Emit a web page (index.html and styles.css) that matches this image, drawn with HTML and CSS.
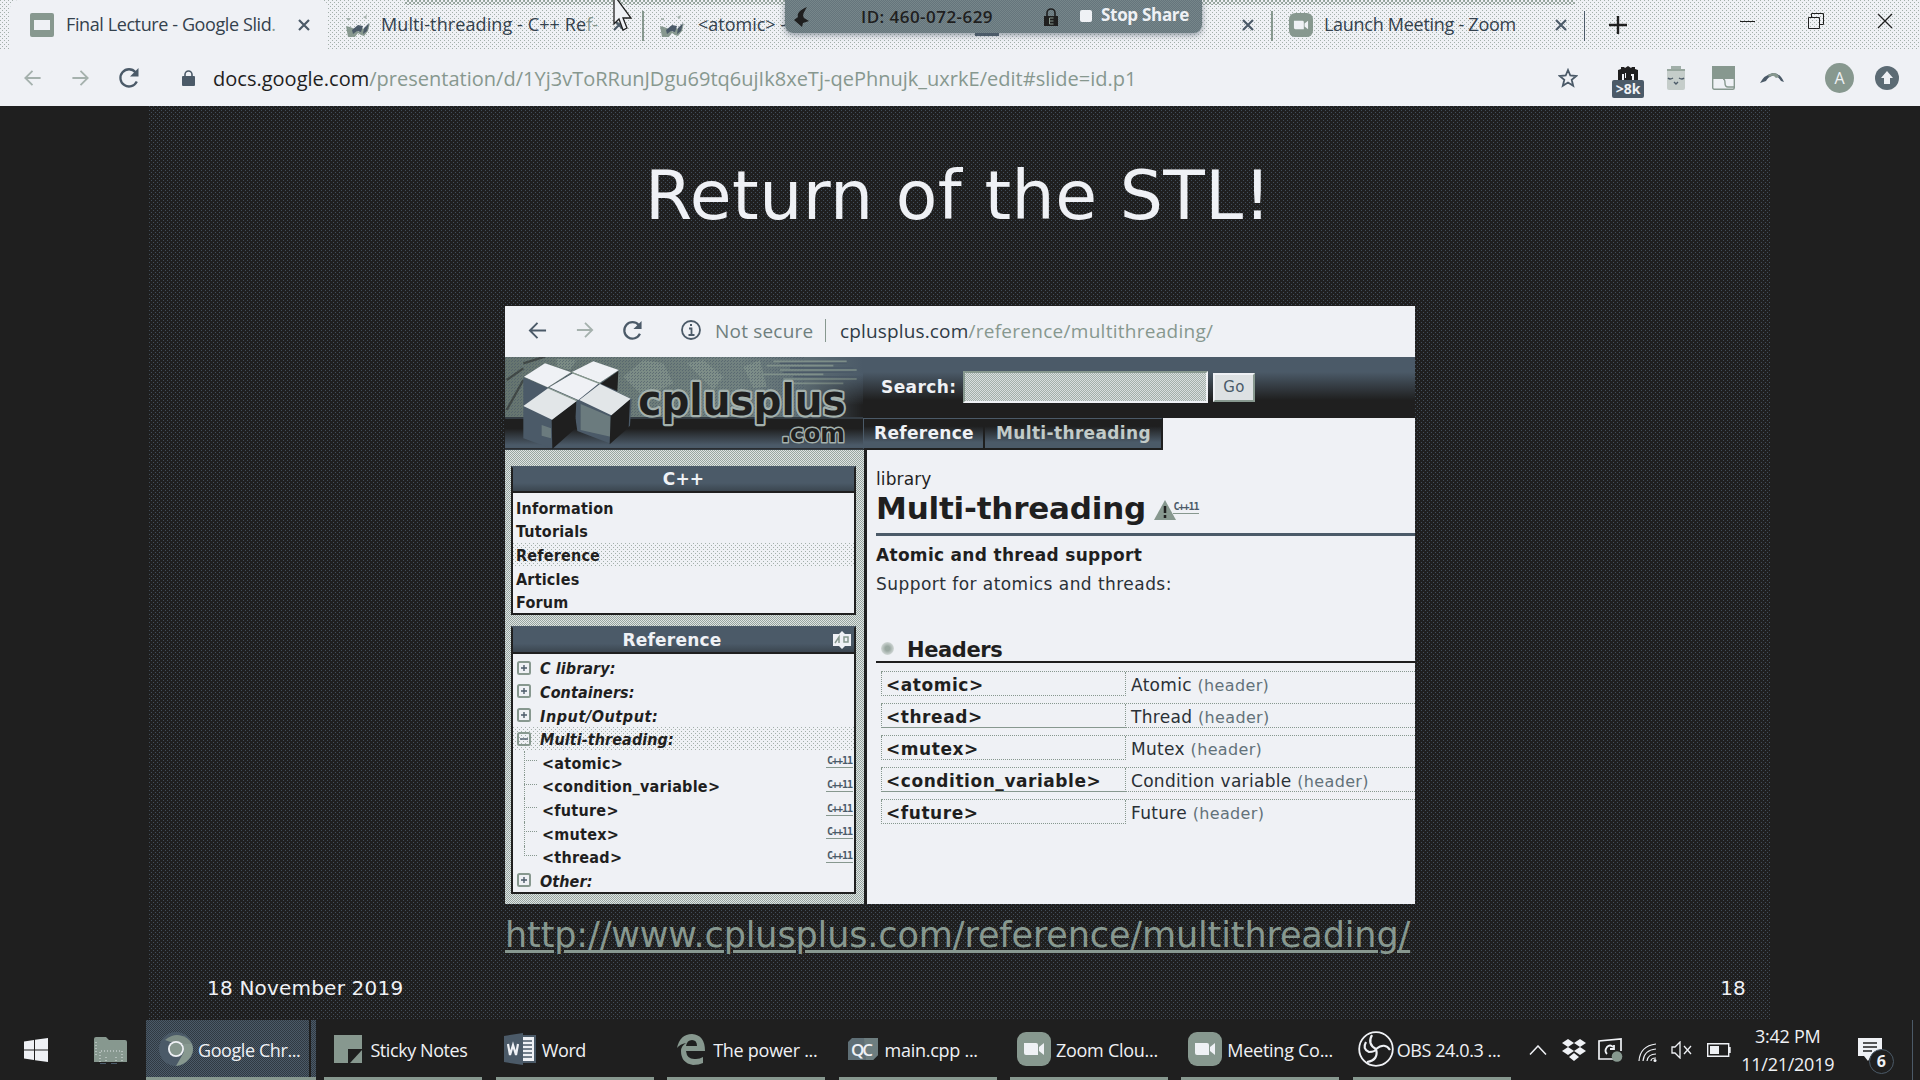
FILE: index.html
```
<!DOCTYPE html>
<html lang="en">
<head>
<meta charset="utf-8">
<title>Final Lecture - Google Slides</title>
<link rel="stylesheet" href="styles.css">
</head>
<body>
<svg class="defs" width="0" height="0">
  <symbol id="x" viewBox="0 0 12 12"><path d="M1 1L11 11M11 1L1 11" fill="none" stroke="currentColor" stroke-width="2.2"/></symbol>
  <symbol id="cube" viewBox="0 0 24 24"><path d="M1 5h3v2H1zM17 4l4-2-1 4z" fill="#a9b5b0"/><path d="M0 13l4 1 5 2 4 3 2-4 4 1 5-6-2 8-4 5-3-1-3-2-4 5-6-1z" fill="#87988f"/><path d="M6 17l6-5 5 1-2 6-4-1-4 3zM18 15l5-5-2 8-4 3z" fill="#4b5a68"/></symbol>
  <symbol id="cam" viewBox="0 0 34 34"><rect width="34" height="34" rx="9" fill="#87988f"/><path d="M7 11h12q2 0 2 2v10H9q-2 0-2-2zM22 15l5-4v12l-5-4z" fill="#eff1f5"/></symbol>
  <symbol id="plus" viewBox="0 0 14 14"><rect x="1" y="1" width="12" height="12" rx="1.5" fill="none" stroke="#87988f" stroke-width="2"/><path d="M4 7h6M7 4v6" stroke="#4b5a68" stroke-width="1.4"/></symbol>
  <symbol id="minus" viewBox="0 0 14 14"><rect x="1" y="1" width="12" height="12" rx="1.5" fill="none" stroke="#87988f" stroke-width="2"/><path d="M3 7h8" stroke="#4b5a68" stroke-width="1.4"/></symbol>
  <symbol id="reload" viewBox="0 0 22 22"><path d="M17.5 5.2A8.6 8.6 0 1 0 18.8 14.5" fill="none" stroke="currentColor" stroke-width="2.3"/><path d="M20.5 1v8.5H12z" fill="currentColor"/></symbol>
  <symbol id="arrow" viewBox="0 0 20 20"><path d="M19 10H2M10 2L2 10l8 8" fill="none" stroke="currentColor" stroke-width="2"/></symbol>
</svg>

<header class="tabs">
  <div class="tab active"><svg class="fav" viewBox="0 0 24 24"><rect width="24" height="24" rx="2" fill="#87988f"/><rect x="4" y="7" width="16" height="10" fill="#eff1f5"/></svg><span class="t1">Final Lecture - Google Slid<i>.</i></span><svg class="close"><use href="#x"/></svg></div>
  <div class="tab two"><svg class="fav"><use href="#cube"/></svg><span class="t2">Multi-threading - C++ Re<i>f-</i></span><svg class="close"><use href="#x"/></svg></div>
  <div class="tab three"><svg class="fav"><use href="#cube"/></svg><span class="t3">&lt;atomic&gt; -</span></div>
  <div class="tab four"><svg class="close"><use href="#x"/></svg></div>
  <div class="tab five"><svg class="fav"><use href="#cam"/></svg><span class="t5">Launch Meeting - Zoom</span><svg class="close"><use href="#x"/></svg></div>
  <svg class="new" viewBox="0 0 18 18"><path d="M9 0v18M0 9h18" stroke="#1f1f1f" stroke-width="2.4"/></svg>
  <div class="win">
    <svg width="15" height="20" viewBox="0 0 15 20"><path d="M0 10.5h15" stroke="#1f1f1f"/></svg>
    <svg width="16" height="16" viewBox="0 0 16 16"><path d="M.5 4.500h11v11H.5zM3.500 4.500v-4h12v11h-4" fill="none" stroke="#1f1f1f"/></svg>
    <svg width="16" height="16" viewBox="0 0 16 16"><path d="M1 1l14 14M15 1L1 15" stroke="#1f1f1f" stroke-width="1.300"/></svg>
  </div>
  <div class="sharebar">
    <svg width="17" height="20" viewBox="0 0 17 20"><path d="M14 0C6 3 4 7 5 10L1 13l8 7 1-4 6-2-5-3c-2-3 0-6 3-11z" fill="#1f1f1f"/></svg>
    <span class="id">ID: 460-072-629</span>
    <svg class="lk" width="14" height="18" viewBox="0 0 14 18"><path d="M3 8V5a4 4 0 0 1 8 0v3" fill="none" stroke="#1f1f1f" stroke-width="1.600"/><path d="M0 8h14v10H0z" fill="#1f1f1f"/><path d="M9.500 10h-4v6h4M5.500 13h4" fill="none" stroke="#87988f"/></svg>
    <b class="sq"></b><span class="stop">Stop Share</span>
  </div>
  <i class="peek"></i>
  <svg class="cursor" viewBox="0 0 20 34"><path d="M1-5V24l5-5 4 11 4-2-4-10h8z" fill="#eff1f5" stroke="#1f1f1f" stroke-width="1.300"/></svg>
</header>

<nav class="toolbar">
  <svg class="back dim"><use href="#arrow"/></svg>
  <svg class="fwd dim"><use href="#arrow"/></svg>
  <svg class="rel"><use href="#reload"/></svg>
  <svg class="lock" viewBox="0 0 13 16"><path d="M3 7V4.500a3.500 3.500 0 0 1 7 0V7" fill="none" stroke="#4b5a68" stroke-width="1.600"/><rect y="6" width="13" height="10" rx="1" fill="#4b5a68"/></svg>
  <p class="url"><b>docs.google.com</b>/presentation/d/1Yj3vToRRunJDgu69tq6ujIk8xeTj-qePhnujk_uxrkE/edit#slide=id.p1</p>
  <div class="ext">
    <svg width="20" height="20" viewBox="0 0 20 20"><path d="M10 2l2.300 5.500 6 .5-4.600 3.800 1.500 6L10 14.600 4.800 17.800l1.500-6L1.700 8l6-.5z" fill="none" stroke="#4b5a68" stroke-width="1.800"/></svg>
    <div class="blk"><svg width="22" height="14" viewBox="0 0 22 14"><path d="M1 14V4l3-1V1h3l1 1 3-2 3 2 1-1h3v2l3 1v10h-4V8h-2v6H7V8H5v6z" fill="#1f1f1f"/><path d="M8 7h1v5H8zM14 8h2v2h-2z" fill="#eff1f5"/></svg><em>&gt;8k</em></div>
    <svg width="22" height="24" viewBox="0 0 22 24"><path d="M2 3h18v19q0 2-2 2H4q-2 0-2-2z" fill="#c5cdca"/><path d="M6 0h10v3h4v2H2V3h4z" fill="#87988f" opacity=".75"/><path d="M3 12q2 2 5 0m6 0q3 2 5 0M9 16l2 2 2-2" fill="none" stroke="#4b5a68" stroke-width="1.400"/></svg>
    <svg width="23" height="24" viewBox="0 0 23 24"><rect x=".7" y=".7" width="21.600" height="22.600" rx="1.500" fill="#eff1f5" stroke="#87988f" stroke-width="1.400"/><path d="M0 0h23v13H0z" fill="#87988f"/><path d="M11 13q2 0 2 4t3 4h6" fill="none" stroke="#87988f" stroke-width="1.400"/></svg>
    <svg width="24" height="12" viewBox="0 0 24 12"><path d="M0 11Q4 3 13 1q7 0 11 9l-3-1Q17 3 12 4 8 5 6 9z" fill="#4b5a68"/><path d="M8 3q8-5 11 2l-3 1q-3-4-7-1z" fill="#87988f"/></svg>
    <span class="ava">A</span>
    <svg class="up" width="24" height="24" viewBox="0 0 24 24"><circle cx="12" cy="12" r="12" fill="#5c6b74"/><path d="M12 5l6 7h-3v6H9v-6H6z" fill="#eff1f5"/></svg>
  </div>
</nav>

<main class="stage">
  <section class="slide">
    <h1>Return of the STL!</h1>
    <div class="shot">
      <div class="snav">
        <svg class="sb"><use href="#arrow"/></svg><svg class="sf"><use href="#arrow"/></svg><svg class="sr"><use href="#reload"/></svg>
        <svg class="si" viewBox="0 0 20 20"><circle cx="10" cy="10" r="9" fill="none" stroke="#4b5a68" stroke-width="1.800"/><path d="M8 8.500h2.500V15M7.500 15h6M9 5h2" fill="none" stroke="#4b5a68" stroke-width="1.800"/></svg>
        <span class="ns">Not secure</span><span class="su"><b>cplusplus.com</b>/reference/multithreading/</span>
      </div>
      <div class="banner">
        <svg class="logo" viewBox="15 171 1074 279">
          <defs>
            <linearGradient id="g1" x2="0" y2="1"><stop offset="0" stop-color="#1f1f1f"/><stop offset=".35" stop-color="#1f1f1f"/><stop offset=".85" stop-color="#4b5a68"/></linearGradient>
            <linearGradient id="g2"><stop offset="0" stop-color="#66756f"/><stop offset=".65" stop-color="#728280"/><stop offset="1" stop-color="#4b5a68"/></linearGradient>
            <linearGradient id="g4" x2="0" y2="1"><stop offset=".3" stop-color="#1f1f1f" stop-opacity="0"/><stop offset=".8" stop-color="#1f1f1f"/></linearGradient>
            <linearGradient id="g5"><stop offset="0" stop-color="#000"/><stop offset="1" stop-color="#fff"/></linearGradient>
            <mask id="m"><rect x="900" y="171" width="189" height="180" fill="url(#g5)"/></mask>
            <pattern id="p" width="9" height="9" patternUnits="userSpaceOnUse"><path d="M0 0h3v3H0zM6 3h3v3H6z" fill="#4b5a68"/></pattern>
          </defs>
          <rect x="15" y="171" width="1074" height="182" fill="url(#g2)"/>
          <path d="M370 230l60-50 60 10 30 60-40 20-60 10zM560 190l50-10 60 50-30 40zM730 200l50-20 20 80-40 5zM170 176l60 4-20 30-40-10z" fill="#87988f" opacity=".6"/>
          <rect x="15" y="171" width="900" height="182" fill="url(#p)" opacity=".6"/>
          <path d="M820 184h220M800 197h200M840 210h230M790 223h180M850 237h220M880 250h150" stroke="#87988f" stroke-width="5" opacity=".8"/>
          <path d="M840 190h200M870 204h190M850 217h210M880 230h200" stroke="#4b5a68" stroke-width="4"/>
          <rect x="900" y="171" width="189" height="180" fill="url(#g4)" mask="url(#m)"/>
          <rect x="15" y="351" width="1074" height="99" fill="url(#g1)"/>
          <path d="M15 354H1089" stroke="#4b5a68" stroke-width="3"/>
          <path d="M70 190l65-20M20 240l50-35M20 330l50-90" stroke="#1f1f1f" stroke-width="7" opacity=".5"/>
          <path d="M70 232l75 32 70 35v50l-57 98-88-32z" fill="#4b5a68"/><path d="M145 264l70-45 85 32 55-38-5 62 45 22-5 80-58 54-100-38-12-80z" fill="#4b5a68"/>
          <path d="M242 312l90 38v60l-90-20zM125 375l28 10v30l-28-8z" fill="#87988f" opacity=".55"/>
          <path d="M155 360l74-56-4 82-68 61zM332 347l58-50-4 86-57 50zM302 251l53-38-3 60z" fill="#1f1f1f"/>
          <path d="M72 230l63-40 78 27-70 45zM216 216l64-32 76 26-57 38zM148 262l71-42 78 30-62 50z" fill="#eff1f5"/>
          <path d="M70 318l75-54 86 38-75 57zM238 300l62-48 92 44-58 50z" fill="#e2e6e8"/>
          <path d="M145 264l86 38M216 218l84 33" stroke="#87988f" stroke-width="4"/>
          <g font-family="DejaVu Sans" font-weight="700" fill="#1f1f1f" stroke="#a4b1ad" paint-order="stroke" stroke-linejoin="round">
            <text x="415" y="346" font-size="126" textLength="622" lengthAdjust="spacingAndGlyphs" stroke-width="13">cplusplus</text>
            <text x="843" y="427" font-size="76" textLength="192" lengthAdjust="spacingAndGlyphs" stroke-width="9">.com</text>
          </g>
          <path d="M15 446.500H1089" stroke="#1f1f1f" stroke-width="4"/>
        </svg>
        <div class="right">
          <div class="search"><b>Search:</b><span class="inp"></span><span class="go">Go</span></div>
          <div class="crumbs"><span class="c1">Reference</span><span class="c2">Multi-threading</span></div>
        </div>
      </div>
      <div class="cols">
        <aside>
          <div class="box first"><h3>C++</h3>
            <ul><li>Information</li><li>Tutorials</li><li class="hl">Reference</li><li>Articles</li><li>Forum</li></ul></div>
          <div class="box"><h3>Reference<svg class="hi" viewBox="0 0 20 18"><path d="M1 3h6l3-3 3 3h6v12h-6l-3 3-3-3H1z" fill="#eff1f5"/><path d="M3 12l4-6v6M12 6h4v5h-4z" fill="none" stroke="#87988f" stroke-width="1.500"/></svg></h3>
            <ul class="tree">
              <li><svg><use href="#plus"/></svg><i>C library:</i></li>
              <li><svg><use href="#plus"/></svg><i>Containers:</i></li>
              <li><svg><use href="#plus"/></svg><i class="io">Input/Output:</i></li>
              <li class="hl"><svg><use href="#minus"/></svg><i>Multi-threading:</i></li>
              <li class="sub"><span>&lt;atomic&gt;</span><em>C++11</em></li>
              <li class="sub"><span>&lt;condition_variable&gt;</span><em>C++11</em></li>
              <li class="sub"><span>&lt;future&gt;</span><em>C++11</em></li>
              <li class="sub"><span>&lt;mutex&gt;</span><em>C++11</em></li>
              <li class="sub last"><span>&lt;thread&gt;</span><em>C++11</em></li>
              <li><svg><use href="#plus"/></svg><i>Other:</i></li>
            </ul></div>
        </aside>
        <article>
          <div class="lib">library</div>
          <h2>Multi-threading<svg viewBox="0 0 22 20"><path d="M11 0l11 20H0z" fill="#87988f"/><path d="M11 6v7M11 15v3" stroke="#1f1f1f" stroke-width="2.500"/></svg><em>C++11</em></h2>
          <h4>Atomic and thread support</h4>
          <p>Support for atomics and threads:</p>
          <h5><i></i>Headers</h5>
          <div class="tbl">
            <div><b>&lt;atomic&gt;</b><span>Atomic <small>(header)</small></span></div>
            <div><b>&lt;thread&gt;</b><span>Thread <small>(header)</small></span></div>
            <div><b>&lt;mutex&gt;</b><span>Mutex <small>(header)</small></span></div>
            <div><b>&lt;condition_variable&gt;</b><span>Condition variable <small>(header)</small></span></div>
            <div><b>&lt;future&gt;</b><span>Future <small>(header)</small></span></div>
          </div>
        </article>
      </div>
    </div>
    <a class="link">http://www.cplusplus.com/reference/multithreading/</a>
    <footer><span>18 November 2019</span><span>18</span></footer>
  </section>
</main>

<footer class="taskbar">
  <svg class="start" viewBox="0 0 24 24"><path d="M0 3.500l10-1.500v9.500H0zM11 1.800L24 0v11.500H11zM0 12.500h10V22L0 20.500zM11 12.500h13V24l-13-1.800z" fill="#eff1f5"/></svg>
  <svg class="files" viewBox="0 0 33 27"><path d="M0 2q0-2 2-2h10l3 3h16q2 0 2 2v20H0z" fill="#87988f"/><path d="M2 5v15M6 25V14h22v11M12 20v5M22 20v5" fill="none" stroke="#dfe4e6" stroke-dasharray="1 2"/><path d="M6 27h6M17 27h6" stroke="#4b5a68" stroke-width="2"/></svg>
  <div class="apps">
    <div class="app on"><svg viewBox="0 0 34 34"><circle cx="17" cy="17" r="17" fill="#4b5a68"/><path d="M6 8a17 17 0 0 1 27 4H17z" fill="#7d8d86"/><path d="M24 12h9q3 8-3 15-5 6-13 7l8-14z" fill="#87988f"/><circle cx="17" cy="17" r="8" fill="#eff1f5"/><circle cx="17" cy="17" r="6.200" fill="#87988f"/></svg><span class="ls4">Google Chr...</span></div>
    <div class="app"><svg viewBox="0 0 34 34"><path d="M3 3h28v28H3z" fill="#87988f"/><path d="M17 31V17h14v14z" fill="#1f1f1f"/><path d="M19 31L31 18v13z" fill="#87988f"/></svg><span class="ls4">Sticky Notes</span></div>
    <div class="app"><svg viewBox="0 0 34 34"><path d="M15 4h17v26H15z" fill="#eff1f5" stroke="#4b5a68" stroke-width="2"/><path d="M20 9h9M20 13h9M20 17h9M20 21h9M20 25h9" stroke="#4b5a68" stroke-width="1.500"/><path d="M1 4L20 1v32L1 30z" fill="#4b5a68"/><path d="M5 12l2 11 3-10 3 10 2-11" fill="none" stroke="#eff1f5" stroke-width="2.200"/></svg><span class="ls4">Word</span></div>
    <div class="app"><svg viewBox="0 0 34 34"><path d="M3 16Q6 2 18 2q13 1 13 17H12q1 9 10 8 4 0 7-2v6q-4 2-10 2Q7 31 7 19q0-5 5-8-6 1-9 5zM12 14h11q0-6-5-6t-6 6z" fill="#87988f"/></svg><span class="ls2">The power ...</span></div>
    <div class="app"><svg viewBox="0 0 34 34"><path d="M6 6h26v17l-5 5H2V10z" fill="#5f6f76"/><path d="M18 6h14v17l-5 5H20z" fill="#6d7d7f"/><text x="5" y="24" font-family="Open Sans" font-weight="600" font-size="17" textLength="22" fill="#eff1f5">QC</text></svg><span class="ls2">main.cpp ...</span></div>
    <div class="app"><svg><use href="#cam"/></svg><span class="ls2">Zoom Clou...</span></div>
    <div class="app"><svg><use href="#cam"/></svg><span class="ls2">Meeting Co...</span></div>
    <div class="app"><svg class="obs" viewBox="0 0 36 36"><circle cx="18" cy="18" r="16.800" fill="none" stroke="#eff1f5" stroke-width="1.800"/><path d="M14 4q-5 9 4 14 9-7 14 1M18 18q3 11-9 13M8 11q-4 7 3 10 6 0 7-3" fill="none" stroke="#eff1f5" stroke-width="2.200"/></svg><span class="ls4">OBS 24.0.3 ...</span></div>
  </div>
  <div class="tray">
    <svg width="18" height="10" viewBox="0 0 18 10"><path d="M1 9.500L9 1l8 8.500" fill="none" stroke="#eff1f5" stroke-width="1.500"/></svg>
    <svg width="24" height="22" viewBox="0 0 24 22"><path d="M6 0l6 4-6 4-6-4zM18 0l6 4-6 4-6-4zM6 8l6 4-6 4-6-4zM18 8l6 4-6 4-6-4zM12 14l5 4-5 4-5-4z" fill="#eff1f5"/></svg>
    <svg width="25" height="24" viewBox="0 0 25 24"><path d="M17 21H1V3l22-2v12" fill="none" stroke="#eff1f5" stroke-width="1.700"/><path d="M16 7v4h-4M15 9q-3-3-6 0-3 4 0 7" fill="none" stroke="#eff1f5" stroke-width="1.800"/><circle cx="19" cy="18.500" r="5.300" fill="#87988f"/></svg>
    <svg width="19" height="19" viewBox="0 0 19 19"><path d="M1 18Q2 3 18 1M5 18Q6 7 18 6M9 18q1-7 9-7M13 18q0-3 5-3" fill="none" stroke="#eff1f5" stroke-width="1.200"/><circle cx="17" cy="17.500" r="1.500" fill="#eff1f5"/></svg>
    <svg width="21" height="18" viewBox="0 0 21 18"><path d="M1 6h3l5-5v16l-5-5H1zM13 5l7 8M20 5l-7 8" fill="none" stroke="#eff1f5" stroke-width="1.300"/></svg>
    <svg width="24" height="14" viewBox="0 0 24 14"><path d="M.7.7h21v12.600H.7zM23 4v6" fill="none" stroke="#eff1f5" stroke-width="1.400"/><path d="M3 3h9v8H3z" fill="#eff1f5"/></svg>
  </div>
  <div class="clock"><span>3:42 PM</span><span>11/21/2019</span></div>
  <div class="note"><svg viewBox="0 0 24 23"><path d="M0 0h24v18H13l-3 5-4-5H0z" fill="#eff1f5"/><path d="M5 5h14M5 9h14M5 13h9" stroke="#1f1f1f" stroke-width="1.500"/></svg><b>6</b></div>
</footer>
</body>
</html>
```
FILE: styles.css
```
:root {
  --ink: #1f1f1f;
  --slate: #4b5a68;
  --sage: #87988f;
  --paper: #eff1f5;
  --sage-dots: conic-gradient(from 270deg at 1px 1px, #a3b0aa 90deg, transparent 0);
  --slate-dots: conic-gradient(from 270deg at 1px 1px, #424e5a 90deg, transparent 0);
}
* { box-sizing: border-box; margin: 0; padding: 0; }
body { width: 1920px; height: 1080px; overflow: hidden; background: var(--ink); font-family: "Open Sans", sans-serif; color: var(--ink); display: flex; flex-direction: column; }
.defs { position: absolute; }
svg { flex: none; display: block; }
i, em { font-style: normal; }
ul { list-style: none; }

/* Tab strip */
.tabs { position: relative; height: 50px; display: flex; align-items: center; padding-left: 10px; font-size: 18px; color: var(--slate); background: var(--sage-dots) 0 0/4px 4px, var(--sage-dots) 2px 2px/4px 4px, var(--paper); white-space: nowrap; }
.tabs::before { content: ""; position: absolute; left: 405px; width: 1170px; top: 0; height: 5px; background: repeating-conic-gradient(var(--sage) 0 25%, var(--paper) 0 50%) 0 0/4px 4px; opacity: .8; }
.tab { height: 50px; display: flex; align-items: center; line-height: 49px; }
.tab span { height: 50px; color: #34414d; }
.fav { width: 24px; height: 24px; }
.close { width: 12px; height: 12px; }
.active { width: 318px; background: var(--paper); border-radius: 8px 8px 0 0; padding-left: 20px; }
.active span { margin-left: 12px; width: 232px; }
.t1 { letter-spacing: -.4px; }
.t5 { letter-spacing: -.28px; }
.two { width: 315px; padding-left: 18px; position: relative; }
.two span { margin-left: 11px; width: 232px; letter-spacing: .1px; }
.tab span i { color: var(--sage); }
.two::after, .five::before, .five::after { content: ""; position: absolute; top: 11px; right: -1px; width: 2px; height: 30px; background: var(--sage); }
.three { width: 340px; padding-left: 17px; }
.three span { margin-left: 14px; }
.four { width: 288px; padding-left: 259px; }
.five { width: 313px; padding-left: 18px; position: relative; }
.five::before { right: auto; left: 0; }
.five::after { width: 1px; background: var(--slate); }
.five span { margin-left: 11px; width: 231px; }
.new { width: 18px; height: 18px; margin-left: 25px; }
.win { display: flex; align-items: center; gap: 53px; margin: -8px 0 0 113px; }
.sharebar { position: absolute; left: 785px; top: 0; width: 417px; height: 33px; border-radius: 0 0 8px 8px; background: repeating-conic-gradient(#76868a 0 25%, #65757c 0 50%) 0 0/2px 2px; display: flex; align-items: center; padding-left: 8px; box-shadow: 0 2px 6px rgba(75,90,104,.6); }
.id { font: 600 17px/33px "Open Sans", sans-serif; letter-spacing: .46px; color: var(--ink); margin-left: 51px; width: 183px; }
.sq { width: 12px; height: 12px; border-radius: 2px; background: var(--paper); margin: -2px 9px 0 22px; }
.stop { font: 700 17px/30px "Open Sans", sans-serif; letter-spacing: -.3px; color: var(--paper); margin-top: -3px; }
.peek { position: absolute; left: 975px; top: 33px; width: 24px; height: 3px; background: var(--slate); }
.cursor { position: absolute; left: 613px; top: 0; width: 20px; height: 34px; }

/* Toolbar */
.toolbar { height: 56px; background: var(--paper); display: flex; align-items: center; padding-left: 23px; color: var(--slate); }
.dim { color: #a5b1ad; }
.back, .fwd { width: 19px; height: 18px; }
.fwd { transform: scaleX(-1); margin-left: 29px; }
.rel { width: 22px; height: 22px; margin-left: 28px; }
.lock { width: 13px; height: 16px; margin-left: 42px; }
.url { flex: none; font-size: 20px; line-height: 56px; height: 55px; margin-left: 18px; width: 1345px; letter-spacing: .01px; color: var(--sage); }
.url b { font-weight: 400; color: var(--ink); }
.ext { display: flex; align-items: center; }
.ext > * { flex: none; }
.blk { margin: 8px 21px 0 34px; width: 32px; display: flex; flex-direction: column; align-items: center; }
.blk em { align-self: stretch; height: 18px; font: 700 14px/18px "Open Sans", sans-serif; color: var(--paper); background: var(--slate); border-radius: 2px; text-align: center; }
.ext > svg + svg { margin-left: 25px; }
.ext .ava { margin-left: 41px; width: 29px; height: 30px; border-radius: 50%; background: var(--sage); color: var(--paper); font-size: 16px; line-height: 30px; text-align: center; }
.ext .up { margin-left: 21px; }

/* Slide */
.stage { height: 914px; padding: 0 149px; }
.slide { height: 914px; background: var(--slate-dots) 0 0/4px 4px, var(--slate-dots) 2px 2px/4px 4px, var(--ink); padding-top: 50px; color: var(--paper); font-family: "DejaVu Sans", sans-serif; }
h1 { font-weight: 400; font-size: 68px; line-height: 80px; letter-spacing: .5px; margin-left: 496px; white-space: nowrap; }
.shot { width: 910px; height: 598px; margin: 70px 0 0 356px; background: var(--paper); color: var(--ink); overflow: hidden; }
.link { display: block; margin: 11px 0 0 356px; font-size: 35px; line-height: 40px; letter-spacing: -.13px; color: var(--sage); text-decoration: underline; text-decoration-thickness: 3px; text-underline-offset: 3px; }
.slide > footer { margin: 21px 25px 0 58px; display: flex; justify-content: space-between; font-size: 20px; line-height: 24px; letter-spacing: .2px; }

.snav { height: 51px; display: flex; align-items: center; color: var(--slate); font-family: "Open Sans", sans-serif; font-size: 19px; line-height: 50px; padding: 0 0 3px 23px; }
.sb { width: 19px; height: 19px; }
.sf { width: 18px; height: 18px; margin-left: 29px; color: #a5b1ad; transform: scaleX(-1); }
.sr { width: 21px; height: 21px; margin-left: 28px; }
.si { width: 20px; height: 20px; margin-left: 38px; }
.ns { margin-left: 14px; width: 111px; letter-spacing: .2px; color: #6f7f7e; height: 48px; position: relative; }
.ns::after { content: ""; position: absolute; right: 0; top: 13px; width: 1px; height: 23px; background: var(--sage); }
.su { margin-left: 14px; letter-spacing: .28px; color: var(--sage); height: 48px; }
.su b { font-weight: 400; color: #303b45; letter-spacing: .15px; }

.banner { height: 93px; display: flex; }
.logo { width: 358px; height: 93px; }
.right { flex: 1; }
.search { height: 61px; background: linear-gradient(var(--slate) 0 25%, #1f1f1f 72%); border-bottom: 1px solid var(--ink); display: flex; align-items: center; padding-left: 18px; color: var(--paper); font-size: 17px; letter-spacing: .4px; }
.search b { width: 82px; margin-top: -1px; }
.inp { width: 245px; height: 32px; border: 2px solid var(--paper); border-top-color: var(--sage); border-left-color: var(--sage); background: repeating-conic-gradient(#a3b0aa 0 25%, #d9dedf 0 50%) 0 0/2px 2px; }
.go { width: 42px; height: 29px; margin-left: 5px; background: #dde1e3; border: 2px solid var(--paper); border-right-color: var(--sage); border-bottom-color: var(--sage); color: var(--slate); font: 15px/24px "DejaVu Sans", sans-serif; text-align: center; }
.crumbs { width: 300px; height: 32px; background: linear-gradient(var(--ink) 25%, var(--slate) 80%); border: 1px solid var(--slate); border-bottom: 2px solid var(--ink); border-right: 2px solid var(--ink); display: flex; font-weight: 700; font-size: 17px; line-height: 28px; color: var(--paper); }
.c1 { padding-left: 10px; letter-spacing: .3px; width: 121px; border-right: 2px solid var(--ink); }
.c2 { padding-left: 11px; letter-spacing: .35px; color: #c2cbc9; }

.cols { display: flex; height: 454px; }
aside { flex: none; width: 362px; padding: 16px 10px 0 6px; background: repeating-conic-gradient(#97a69f 0 25%, #dfe3e4 0 50%) 0 0/2px 2px; border-right: 3px solid var(--ink); font-family: "DejaVu Sans Condensed", "DejaVu Sans", sans-serif; font-weight: 700; font-size: 16px; letter-spacing: .2px; }
.box { width: 345px; border: 2px solid var(--ink); border-top-color: var(--slate); background: var(--paper); }
.first { height: 149px; }
.box + .box { margin-top: 11px; }
h3 { height: 25px; background: linear-gradient(var(--slate) 65%, #3b4650); border-bottom: 2px solid var(--ink); color: var(--paper); font: 700 17px/23px "DejaVu Sans", sans-serif; text-align: center; position: relative; }
.box + .box h3 { padding-right: 23px; height: 26px; line-height: 25px; }
.hi { position: absolute; right: 2px; top: 3px; width: 20px; height: 18px; }
.box ul { padding-top: 2px; }
.box.first ul { padding-top: 3px; }
li { height: 23.65px; line-height: 22px; padding: 2px 0 0 3px; display: flex; align-items: center; }
.hl { background: var(--sage-dots) 0 0/4px 4px, var(--sage-dots) 2px 2px/4px 4px; }
.tree { position: relative; top: .4px; }
.tree li { padding-left: 4px; padding-right: 1px; position: relative; }
.tree svg { width: 14px; height: 14px; margin: -3px 10px 0 0; }
.tree i { font-style: italic; letter-spacing: .08px; margin-left: -1px; }
.tree .io { letter-spacing: .57px; }
.tree .sub { padding-left: 29px; justify-content: space-between; letter-spacing: .26px; }
.sub::before, .sub::after { content: ""; position: absolute; left: 11px; top: 0; height: 100%; border-left: 1px dotted var(--sage); }
.sub::after { top: 9px; height: 0; width: 13px; border-left: 0; border-top: 1px dotted var(--sage); }
.last::before { height: 10px; }
.sub em, h2 em { width: 27px; height: 13px; font: 700 10px/12px "DejaVu Sans Mono", monospace; letter-spacing: -1px; color: var(--slate); border-bottom: 1px solid var(--sage); margin-top: -4px; text-align: center; }

article { flex: 1; min-width: 0; padding: 16px 0 0 9px; white-space: nowrap; }
.lib { font-size: 17px; line-height: 26px; height: 24px; letter-spacing: .1px; }
h2 { height: 46px; display: flex; font-size: 31px; line-height: 37px; letter-spacing: -.2px; border-bottom: 3px solid var(--slate); }
h2 svg { width: 22px; height: 20px; margin: 10px 0 0 8px; }
h2 em { width: 26px; margin: 11px 0 0 -3px; }
h4 { margin-top: 5px; font-size: 17px; line-height: 29px; height: 28px; letter-spacing: .3px; }
article p { font-size: 17px; line-height: 30px; height: 28px; letter-spacing: .45px; color: #2a3036; }
h5 { margin-top: 38px; height: 28px; display: flex; align-items: center; font-size: 21px; line-height: 28px; letter-spacing: -.4px; border-bottom: 2px solid var(--ink); padding-top: 3px; }
h5 i { width: 13px; height: 13px; border-radius: 50%; background: radial-gradient(#9aa8a1 25%, #d6dcdb 75%); margin: -2px 13px 0 5px; }
.tbl { margin: 8px 0 0 5px; display: grid; gap: 7px; font-size: 17px; line-height: 26px; }
.tbl div { height: 25px; display: flex; border-top: 1px dotted var(--sage); }
.tbl div:nth-child(even) { border-bottom: 1px dotted var(--sage); }
.tbl b { width: 245px; height: 24px; padding-left: 4px; border: 1px dotted var(--sage); border-top: 0; letter-spacing: .55px; }
.tbl span { padding-left: 5px; letter-spacing: .3px; color: #2a3036; }
.tbl small { font-size: 16px; letter-spacing: .35px; color: #63727a; }

/* Taskbar */
.taskbar { height: 60px; background: var(--ink); display: flex; align-items: center; color: var(--paper); font-size: 18px; white-space: nowrap; padding-left: 24px; }
.start { width: 24px; height: 24px; }
.files { width: 33px; height: 27px; margin-left: 46px; }
.apps { display: flex; margin-left: 19px; height: 60px; gap: 13.4px; }
.app { width: 158px; height: 60px; border-bottom: 3px solid var(--sage); display: flex; align-items: center; padding-left: 7px; }
.app svg { width: 34px; height: 34px; }
.app .obs { width: 36px; height: 36px; margin-left: -2px; }
.app span { margin-left: 5px; line-height: 60px; height: 60px; padding-top: 1px; }
.app .obs + span { margin-left: 3px; }
.app.on { width: 170px; margin-right: -5px; padding-left: 13px; background: linear-gradient(90deg, transparent 163px, var(--ink) 163px 165px, transparent 165px), repeating-conic-gradient(#4b5a68 0 25%, #303942 0 50%) 0 0/2px 2px; }
.app .ls4 { letter-spacing: -.42px; }
.app .ls2 { letter-spacing: -.27px; }
.tray { display: flex; align-items: center; margin-left: 18px; gap: 15px; }
.tray svg:nth-child(3) { margin-left: -3px; }
.tray svg:nth-child(4) { margin-top: 5px; }
.tray svg:nth-child(5) { margin-left: -1px; }
.clock { display: flex; flex-direction: column; align-items: center; width: 94px; margin-left: 10px; line-height: 28px; letter-spacing: -.25px; }
.note { position: relative; width: 24px; margin-left: 23px; }
.note svg { width: 24px; height: 23px; margin-top: -1px; }
.note b { position: absolute; left: 11px; top: 10px; width: 25px; height: 25px; border: 1px solid var(--slate); border-radius: 50%; background: var(--ink); font-size: 16px; line-height: 23px; text-align: center; }
.taskbar::after { content: ""; width: 1px; height: 60px; margin-left: 30px; background: var(--slate); }
```
